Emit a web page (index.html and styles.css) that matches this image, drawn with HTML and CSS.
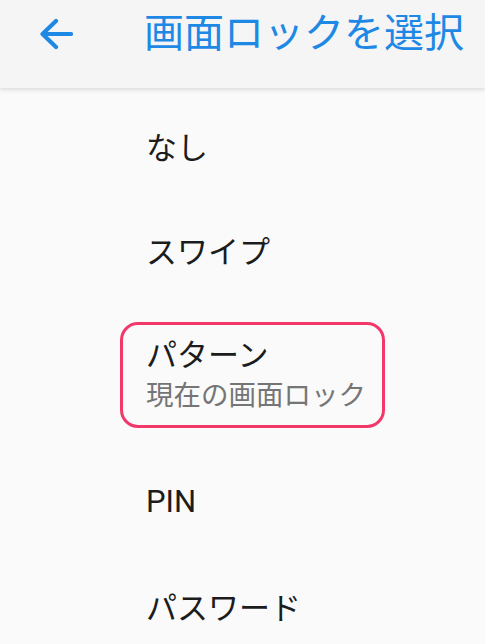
FILE: index.html
```html
<!DOCTYPE html>
<html lang="ja">
<head>
    <meta charset="UTF-8">
    <meta name="viewport" content="width=device-width, initial-scale=1.0">
    <title>画面ロックを選択</title>
    <link rel="stylesheet" href="styles.css">
</head>
<body>
    <header class="app-bar">
        <button class="back-button" aria-label="戻る">
            <svg width="34" height="32" viewBox="0 0 34 32">
                <path d="M32 16H4M17 3L3.5 16L17 29" fill="none" stroke="currentColor" stroke-width="4.2" stroke-linecap="round" stroke-linejoin="round"/>
            </svg>
        </button>
        <h1 class="title">画面ロックを選択</h1>
    </header>

    <ul class="options">
        <li class="option">なし</li>
        <li class="option">スワイプ</li>
        <li class="option current">
            <div class="current-box">
                <div class="option-name">パターン</div>
                <div class="option-sub">現在の画面ロック</div>
            </div>
        </li>
        <li class="option">PIN</li>
        <li class="option">パスワード</li>
    </ul>
</body>
</html>
```

FILE: styles.css
```css
body {
    margin: 0;
    padding: 0;
    background-color: #fafafa;
    color: #1c1c1c;
    font-family: Roboto, 'Noto Sans CJK JP', sans-serif;
    overflow: hidden;
}

.app-bar {
    position: relative;
    z-index: 1;
    height: 88px;
    box-sizing: border-box;
    display: flex;
    align-items: center;
    padding: 0 0 20px 39px;
    background-color: #f5f5f5;
    box-shadow: 0 2px 4px rgba(0, 0, 0, 0.12);
}

.back-button {
    display: flex;
    padding: 0;
    border: none;
    background: none;
    color: #1e88e5;
    cursor: pointer;
}

.title {
    margin: 0 0 0 71px;
    font-size: 40px;
    line-height: 48px;
    font-weight: normal;
    color: #1e88e5;
    white-space: nowrap;
}

.options {
    list-style: none;
    margin: 5px 0 0;
    padding: 0;
}

.option {
    height: 104px;
    display: flex;
    align-items: center;
    padding-left: 146px;
    font-size: 31px;
}

.option.current {
    height: 148px;
}

.current-box {
    margin-left: -26px;
    padding: 10px 16px 10px 23px;
    border: 3px solid #f2386b;
    border-radius: 18px;
}

.option-name {
    line-height: 42px;
    font-size: 31px;
}

.option-sub {
    line-height: 38px;
    font-size: 27.5px;
    color: #757575;
}
```
